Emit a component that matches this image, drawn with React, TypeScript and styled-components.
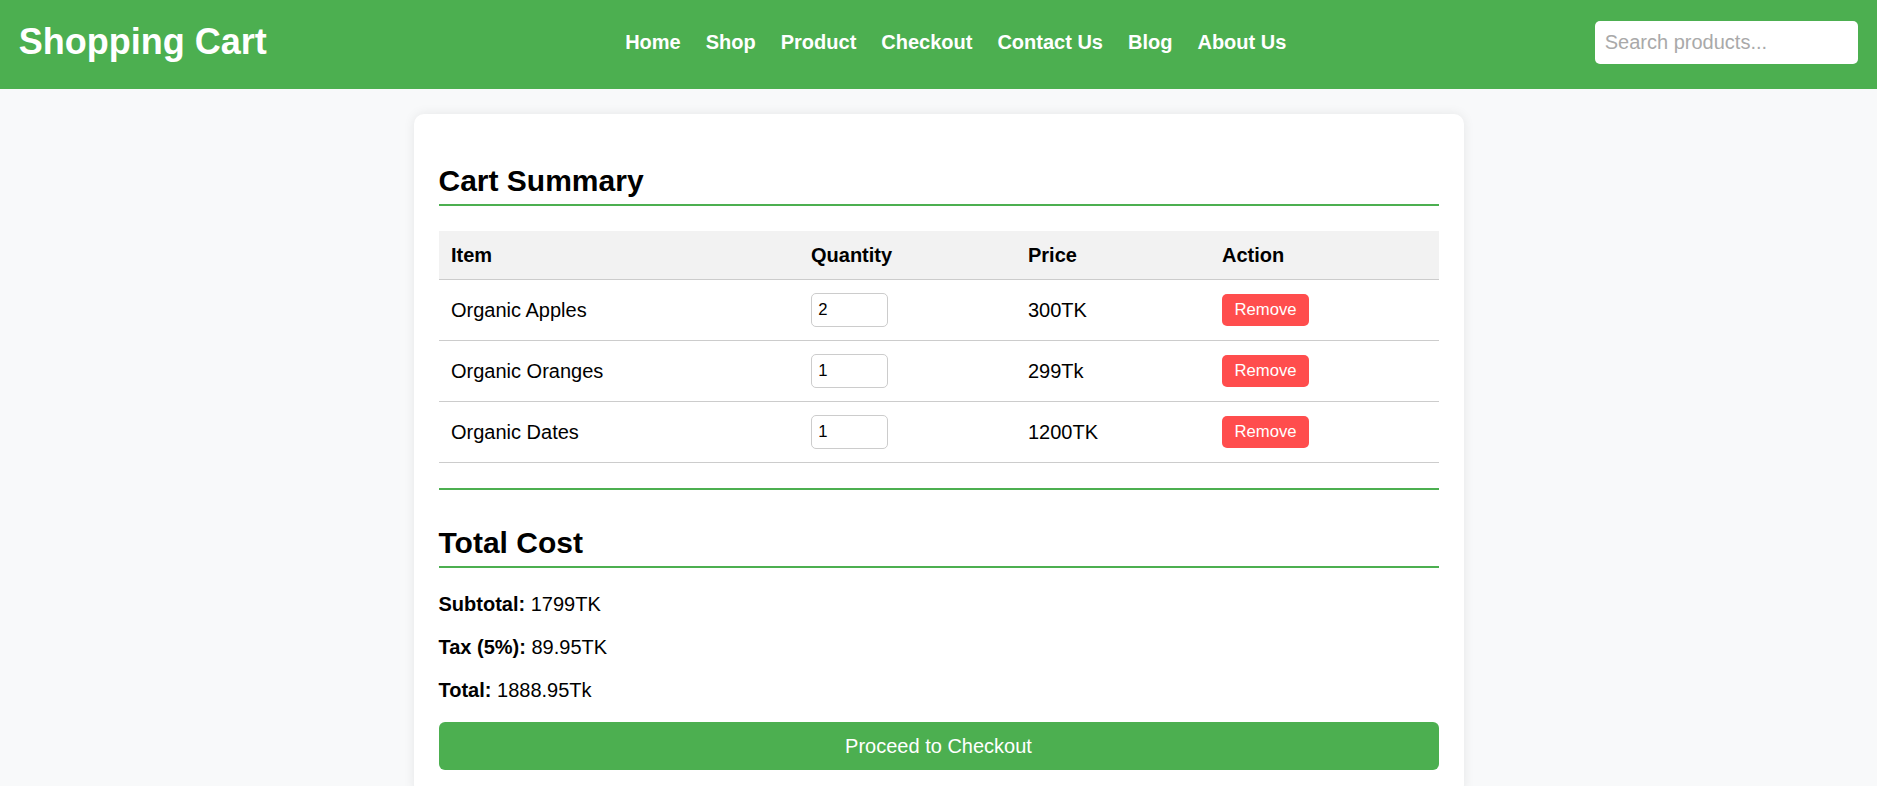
import React from "react";
import styled, { createGlobalStyle } from "styled-components";

const GlobalStyle = createGlobalStyle`
  html, body {
    margin: 0;
    padding: 0;
  }
  body {
    background: #f8f9fa;
    font-family: "Liberation Sans", Arial, sans-serif;
    font-size: 20px;
    color: #000;
  }
  * { box-sizing: border-box; }
`;

const Header = styled.header`
  display: flex;
  justify-content: space-between;
  align-items: center;
  height: 89px;
  padding: 0 18.75px 5px;
  background: #4caf50;
`;

const Logo = styled.h1`
  margin: 0;
  font-size: 36px;
  font-weight: bold;
  color: #fff;
`;

const NavList = styled.ul`
  display: flex;
  gap: 25px;
  list-style: none;
  margin: 0;
  padding: 0 0 0 50px;
`;

const NavLink = styled.a`
  color: #fff;
  font-size: 20px;
  font-weight: bold;
  text-decoration: none;
`;

const SearchInput = styled.input`
  width: 263.5px;
  height: 43px;
  padding: 10px;
  border: none;
  border-radius: 5px;
  font-family: "Liberation Sans", Arial, sans-serif;
  font-size: 20px;
  background: #fff;
  &::placeholder {
    color: #a9a9a9;
  }
`;

const Card = styled.main`
  width: 1050px;
  margin: 25px auto;
  padding: 25px;
  background: #fff;
  border-radius: 10px;
  box-shadow: 0 0 12px rgba(0, 0, 0, 0.08);
`;

const SectionTitle = styled.h2`
  margin: 25px 0;
  padding-bottom: 6px;
  font-size: 30px;
  font-weight: bold;
  border-bottom: 2px solid #4caf50;
`;

const CartSection = styled.section`
  padding-bottom: 25px;
  border-bottom: 2px solid #4caf50;
`;

const TotalSection = styled.section`
  padding-top: 11px;
`;

const Table = styled.table`
  width: 100%;
  border-collapse: collapse;
`;

const HeadCell = styled.th<{ $w: number }>`
  width: ${(p) => p.$w}px;
  padding: 12.5px;
  text-align: left;
  font-weight: bold;
  background: #f2f2f2;
  border-bottom: 1px solid #ccc;
`;

const Cell = styled.td`
  padding: 13px 12.5px;
  text-align: left;
  vertical-align: middle;
  border-bottom: 1px solid #ccc;
`;

const QtyInput = styled.input`
  width: 77px;
  height: 34px;
  padding: 6.25px;
  border: 1px solid #ccc;
  border-radius: 5px;
  font-family: "Liberation Sans", Arial, sans-serif;
  font-size: 16.67px;
  vertical-align: middle;
`;

const RemoveButton = styled.button`
  padding: 6.25px 12.5px;
  border: none;
  border-radius: 5px;
  background: #ff4d4d;
  color: #fff;
  font-family: "Liberation Sans", Arial, sans-serif;
  font-size: 16.67px;
  vertical-align: middle;
  cursor: pointer;
`;

const SummaryLine = styled.p`
  margin: 20px 0;
  font-size: 20px;
`;

const CheckoutButton = styled.button`
  display: block;
  width: 100%;
  padding: 12.5px;
  border: none;
  border-radius: 6px;
  background: #4caf50;
  color: #fff;
  font-family: "Liberation Sans", Arial, sans-serif;
  font-size: 20px;
  cursor: pointer;
`;

const navItems = ["Home", "Shop", "Product", "Checkout", "Contact Us", "Blog", "About Us"];

const items = [
  { name: "Organic Apples", qty: 2, price: "300TK" },
  { name: "Organic Oranges", qty: 1, price: "299Tk" },
  { name: "Organic Dates", qty: 1, price: "1200TK" },
];

export default function App() {
  return (
    <>
      <GlobalStyle />
      <Header>
        <Logo>Shopping Cart</Logo>
        <nav>
          <NavList>
            {navItems.map((n) => (
              <li key={n}>
                <NavLink href="#">{n}</NavLink>
              </li>
            ))}
          </NavList>
        </nav>
        <SearchInput type="text" placeholder="Search products..." />
      </Header>
      <Card>
        <CartSection>
          <SectionTitle>Cart Summary</SectionTitle>
          <Table>
            <thead>
              <tr>
                <HeadCell $w={360}>Item</HeadCell>
                <HeadCell $w={217}>Quantity</HeadCell>
                <HeadCell $w={194}>Price</HeadCell>
                <HeadCell $w={229}>Action</HeadCell>
              </tr>
            </thead>
            <tbody>
              {items.map((it) => (
                <tr key={it.name}>
                  <Cell>{it.name}</Cell>
                  <Cell>
                    <QtyInput type="number" defaultValue={it.qty} min={1} />
                  </Cell>
                  <Cell>{it.price}</Cell>
                  <Cell>
                    <RemoveButton>Remove</RemoveButton>
                  </Cell>
                </tr>
              ))}
            </tbody>
          </Table>
        </CartSection>
        <TotalSection>
          <SectionTitle>Total Cost</SectionTitle>
          <SummaryLine>
            <strong>Subtotal:</strong> 1799TK
          </SummaryLine>
          <SummaryLine>
            <strong>Tax (5%):</strong> 89.95TK
          </SummaryLine>
          <SummaryLine>
            <strong>Total:</strong> 1888.95Tk
          </SummaryLine>
          <CheckoutButton>Proceed to Checkout</CheckoutButton>
        </TotalSection>
      </Card>
    </>
  );
}
